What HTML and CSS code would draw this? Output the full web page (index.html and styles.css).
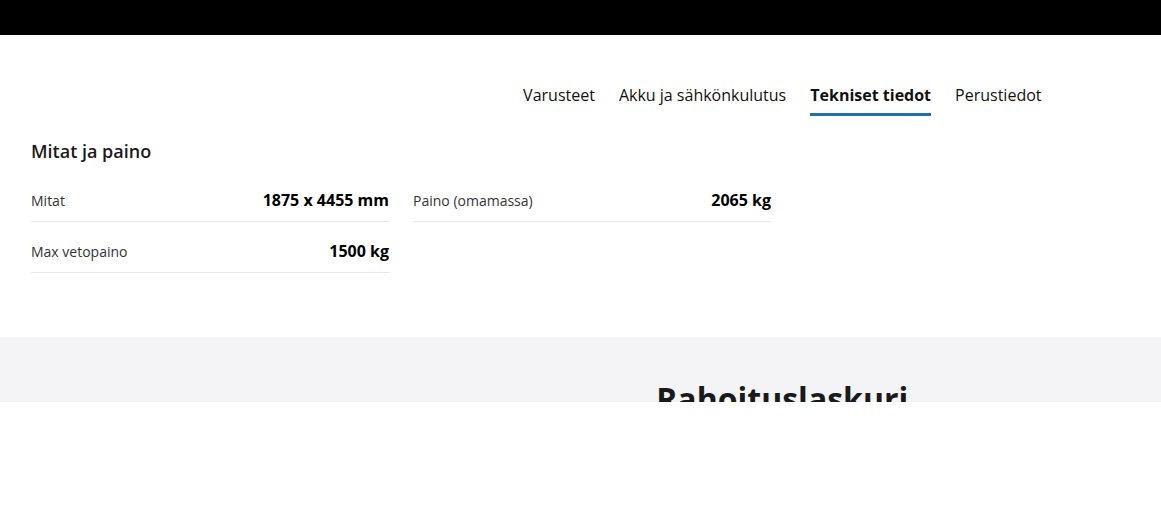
FILE: index.html
```html
<!DOCTYPE html>
<html lang="fi">
<head>
<meta charset="utf-8">
<title>Tekniset tiedot</title>
<link rel="stylesheet" href="styles.css">
</head>
<body>
  <header class="topbar"></header>

  <main class="specs">
    <nav class="tabs">
      <a class="tab" href="#">Varusteet</a>
      <a class="tab" href="#">Akku ja sähkönkulutus</a>
      <a class="tab active" href="#">Tekniset tiedot</a>
      <a class="tab" href="#">Perustiedot</a>
    </nav>

    <section class="group">
      <h2 class="group-title">Mitat ja paino</h2>
      <div class="grid">
        <div class="row"><span class="label">Mitat</span><span class="value">1875 x 4455 mm</span></div>
        <div class="row"><span class="label">Paino (omamassa)</span><span class="value">2065 kg</span></div>
        <div class="row"><span class="label">Max vetopaino</span><span class="value">1500 kg</span></div>
      </div>
    </section>
  </main>

  <section class="finance">
    <div class="finance-inner">
      <h2 class="finance-title">Rahoituslaskuri</h2>
    </div>
  </section>
</body>
</html>
```

FILE: styles.css
```css
* { box-sizing: border-box; }

html, body {
  margin: 0;
  padding: 0;
  background: #fff;
  font-family: "Open Sans", "Noto Sans", sans-serif;
  color: #111;
}

.topbar {
  height: 35px;
  background: #000;
}

.specs {
  padding: 0 31px 64px;
}

.tabs {
  display: flex;
  justify-content: flex-end;
  gap: 24px;
  padding: 48px 88.5px 0 0;
}

.tab {
  display: block;
  font-size: 16px;
  line-height: 24px;
  color: #111;
  text-decoration: none;
  padding-bottom: 6px;
  border-bottom: 3px solid transparent;
}

.tab.active {
  font-weight: 700;
  border-bottom-color: #1f6fb0;
}

.group-title {
  margin: 22px 0 7px;
  font-size: 18px;
  line-height: 26px;
  font-weight: 600;
  color: #1a1a1a;
}

.grid {
  display: grid;
  grid-template-columns: repeat(2, 358px);
  column-gap: 24px;
}

.row {
  display: flex;
  justify-content: space-between;
  align-items: center;
  height: 51px;
  padding-top: 8px;
  border-bottom: 1px solid #e6e6e6;
}

.label {
  font-size: 14px;
  color: #333;
}

.value {
  font-size: 16px;
  font-weight: 700;
  color: #000;
}

.finance {
  background: #f4f4f6;
  height: 65px;
  overflow: hidden;
}

.finance-inner {
  display: grid;
  grid-template-columns: 1fr 1fr;
  padding: 0 31px;
}

.finance-title {
  grid-column: 2;
  margin: 40px 0 0;
  justify-self: center;
  transform: translateX(-73px);
  font-size: 32px;
  line-height: 44px;
  font-weight: 700;
  color: #1a1a1a;
}
```
